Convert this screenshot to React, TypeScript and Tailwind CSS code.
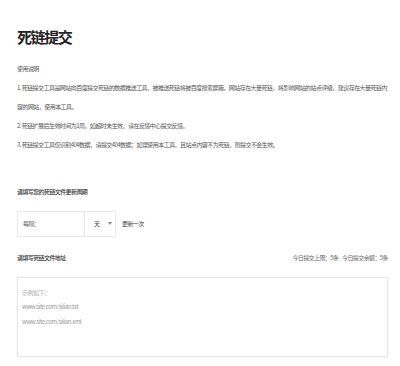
export default function App() {
  const font = { fontFamily: '"Noto Sans CJK SC", "Liberation Sans", sans-serif' };
  return (
    <div className="w-[400px] h-[366px] bg-white overflow-hidden pt-[27px] pl-[17px] pr-[12px]" style={font}>
      <h1 className="text-[15px] leading-[20px] font-bold tracking-[-1.4px] text-[#222]">死链提交</h1>

      <div className="mt-[12px] text-[6px] leading-[19px] tracking-[-0.55px] text-[#555] whitespace-nowrap">
        <p>使用说明</p>
        <p>
          1. 死链提交工具是网站向百度提交死链的数据推送工具，被推送死链将被百度搜索屏蔽。网站存在大量死链，将影响网站的站点评级，建议存在大量死链内
          <br />
          容的网站，使用本工具。
        </p>
        <p>2. 死链扩展后生效时间为1周，如超时未生效，请在反馈中心提交反馈。</p>
        <p>3. 死链提交工具仅识别404数据，请提交404数据；如误使用本工具，且站点内容不为死链，则提交不会生效。</p>
      </div>

      <p className="mt-[28px] text-[6px] leading-[19px] tracking-[-0.6px] text-[#333] font-medium">
        请填写您的死链文件更新周期
      </p>

      <div className="mt-[9.5px] flex items-center gap-[6px]">
        <div className="flex h-[26px] w-[99px] border border-[#e8e8e8] bg-white">
          <div className="flex-1 flex items-center pl-[5px] text-[6px] tracking-[-0.6px] text-[#666]">每隔：</div>
          <div className="w-[31px] border-l border-[#e8e8e8] flex items-center pl-[9px] gap-[8px]">
            <span className="text-[6px] text-[#444]">天</span>
            <span className="w-0 h-0 border-l-[2px] border-r-[2px] border-t-[3px] border-l-transparent border-r-transparent border-t-[#888]" />
          </div>
        </div>
        <span className="text-[6px] tracking-[-0.6px] text-[#444]">更新一次</span>
      </div>

      <div className="mt-[11.5px] flex items-center justify-between w-[371px] text-[6px] leading-[19px] tracking-[-0.6px]">
        <span className="text-[#333] font-medium">请填写死链文件地址</span>
        <span className="text-[#666] whitespace-nowrap">
          今日提交上限：5条 <span className="ml-[3px]">今日提交余额：5条</span>
        </span>
      </div>

      <div className="mt-[9.5px] w-[371px] h-[80px] border border-[#e6e6e6] shadow-[0_0_2px_rgba(0,0,0,0.06)] pt-[8px] pl-[4px] text-[6px] leading-[14.5px] tracking-[-0.4px]">
        <p className="text-[#aaa]">示例如下：</p>
        <p className="text-[#999]">www.site.com/silian.txt</p>
        <p className="text-[#999]">www.site.com/silian.xml</p>
      </div>
    </div>
  );
}
